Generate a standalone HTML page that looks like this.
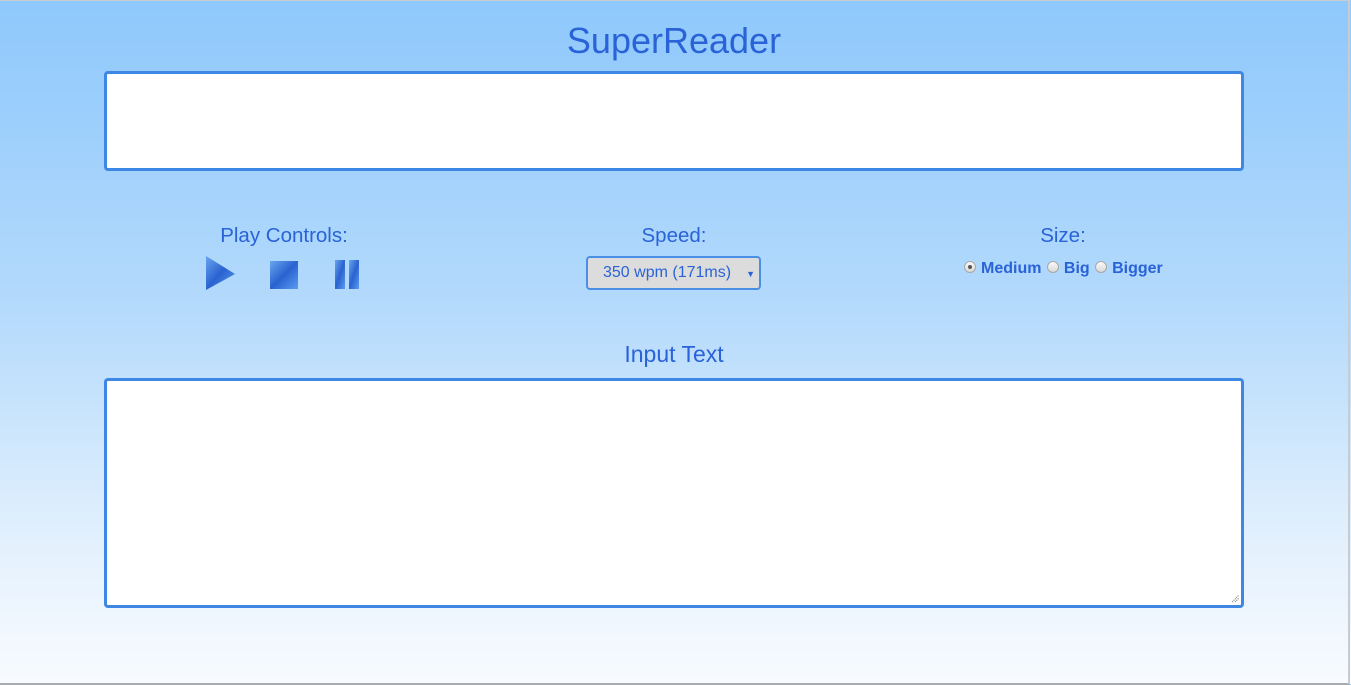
<!DOCTYPE html>
<html><head><meta charset="utf-8"><style>
html,body{margin:0;padding:0;}
body{width:1351px;height:684px;overflow:hidden;position:relative;font-family:"Liberation Sans",sans-serif;color:#2a62d8;
background:linear-gradient(#8ec8fc 0%,#b4dafc 45%,#e4f1fd 80%,#f8fbff 100%);}
.frame{position:absolute;left:0;top:0;width:1348px;height:682px;border-top:1px solid #c8ccd0;border-right:2px solid #c8ccd0;border-bottom:2px solid #a8acb0;box-sizing:content-box;}
h1{position:absolute;left:0;width:1348px;top:20px;margin:0;text-align:center;font-weight:normal;font-size:36px;line-height:42px;color:#2a62d8;}
.box{position:absolute;left:104px;width:1140px;background:#fff;border:3px solid #3f87e4;border-radius:4px;box-sizing:border-box;}
.lbl{position:absolute;font-size:20.5px;line-height:24px;text-align:center;}
.sel{position:absolute;left:586px;top:256px;width:175px;height:34px;box-sizing:border-box;border:2px solid #4a8fe6;border-radius:4px;background:#dcdcdc;font-size:16px;color:#2a62d8;line-height:30px;padding-left:15px;}
.sel span{position:absolute;right:4px;top:1px;font-size:9px;}
.radios{position:absolute;left:963px;top:259px;font-size:16px;font-weight:bold;line-height:20px;white-space:nowrap;}
.r{display:inline-block;width:12px;height:12px;border-radius:50%;border:1px solid #a8a8a8;background:linear-gradient(#fafafa,#d8d8d8);vertical-align:0px;margin:0 5px 0 1px;box-sizing:border-box;position:relative;}
.r.on::after{content:"";position:absolute;left:3px;top:3px;width:4px;height:4px;border-radius:50%;background:#555;}
.grip{position:absolute;left:1230px;top:593px;width:10px;height:10px;}
</style></head><body>
<div class="frame"></div>
<h1>SuperReader</h1>
<div class="box" style="top:71px;height:100px;"></div>
<div class="lbl" style="left:184px;width:200px;top:224px;">Play Controls:</div>
<svg style="position:absolute;left:200px;top:254px" width="170" height="40">
<defs><linearGradient id="g" x1="0" y1="0" x2="1" y2="1"><stop offset="0" stop-color="#6aa6ee"/><stop offset=".5" stop-color="#2a62d0"/><stop offset="1" stop-color="#5a9cf0"/></linearGradient></defs>
<path d="M6 2 L35 20 L6 36 Z" fill="url(#g)"/>
<rect x="70" y="7" width="28" height="28" fill="url(#g)"/>
<rect x="135" y="6" width="10" height="29" fill="url(#g)"/>
<rect x="149" y="6" width="10" height="29" fill="url(#g)"/>
</svg>
<div class="lbl" style="left:574px;width:200px;top:224px;">Speed:</div>
<div class="sel">350 wpm (171ms)<span>▼</span></div>
<div class="lbl" style="left:963px;width:200px;top:224px;">Size:</div>
<div class="radios"><span class="r on"></span>Medium <span class="r"></span>Big <span class="r"></span>Bigger</div>
<div class="lbl" style="left:0;width:1348px;top:342px;font-size:23px;">Input Text</div>
<div class="box" style="top:378px;height:230px;"></div>
<svg class="grip" width="10" height="10"><path d="M2 9 L9 2 M5 9 L9 5" stroke="#666" stroke-width="1" stroke-dasharray="1 1"/></svg>
</body></html>
